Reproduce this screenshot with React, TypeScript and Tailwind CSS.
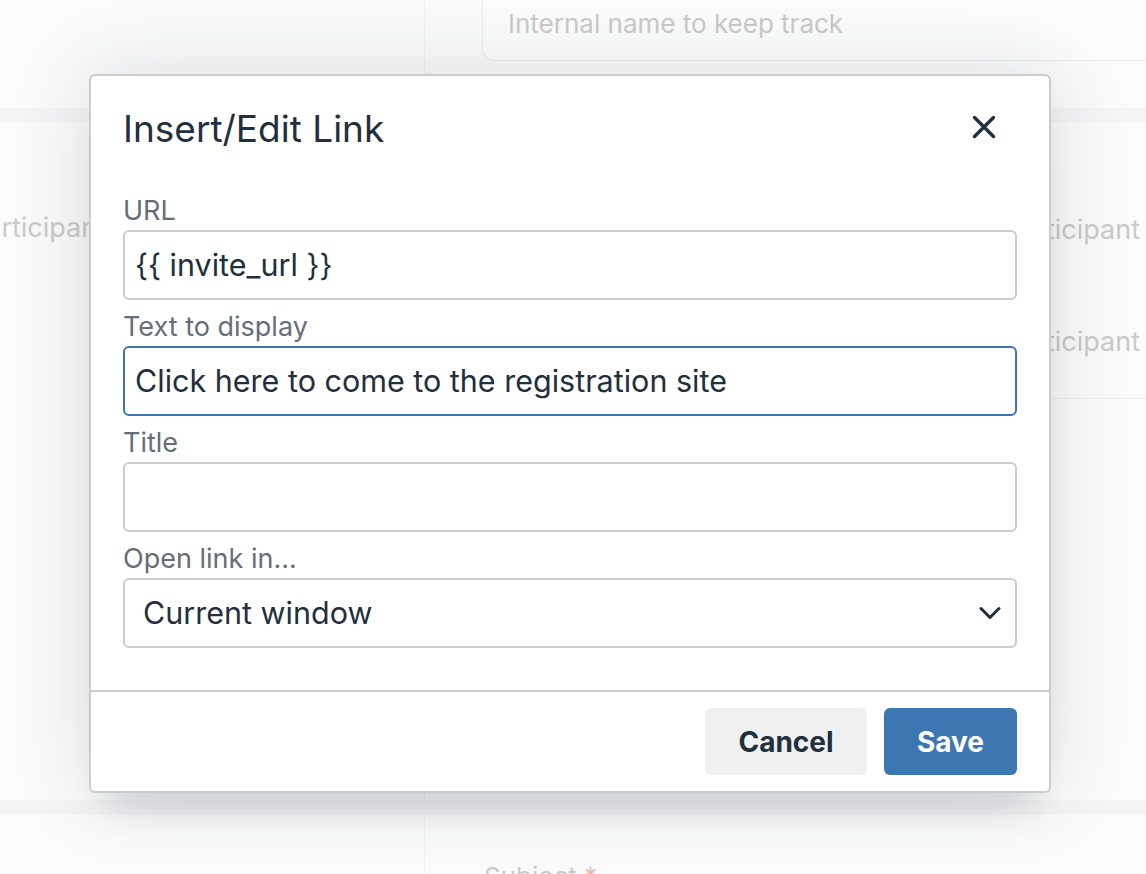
export default function App() {
  return (
    <div className="relative h-[874px] w-[1146px] overflow-hidden bg-white font-[Inter,sans-serif]">
      <PageBehind />
      <LinkDialog />
    </div>
  )
}

function PageBehind() {
  return (
    <div className="flex h-full flex-col bg-[#fbfbfb]">
      <div className="flex h-[108px] shrink-0">
        <div className="w-[425px] border-r border-[#f0f0f0]" />
        <div className="flex-1 pl-[57px]">
          <div className="-mt-px flex h-[62px] items-center rounded-bl-[12px] border-b border-l border-[#ececec] bg-[#fcfcfc] pb-[12px] pl-[25px] text-[26px] text-[#cacaca]">
            Internal name to keep track
          </div>
        </div>
      </div>
      <div className="h-[14px] shrink-0 bg-[#f5f5f6]" />
      <div className="flex h-[678px] shrink-0">
        <div className="w-[425px] overflow-hidden border-r border-[#f0f0f0] pt-[90px]">
          <div className="-ml-[31px] text-[27px] leading-[32px] text-[#cacaca]">Participant</div>
        </div>
        <div className="flex flex-1 flex-col items-end">
          <div className="pr-[6px] pt-[92px] text-[27px] leading-[32px] text-[#cacaca]">Participant</div>
          <div className="mt-[80px] pr-[6px] text-[27px] leading-[32px] text-[#cacaca]">Participant</div>
          <div className="mt-[40px] w-full border-b border-[#eeeeee]" />
        </div>
      </div>
      <div className="h-[15px] shrink-0 bg-[#f5f5f6]" />
      <div className="flex min-h-0 flex-1 overflow-hidden">
        <div className="w-[425px] border-r border-[#f0f0f0]" />
        <div className="pl-[59px] pt-[46px] text-[26px] leading-[32px] text-[#cacaca]">
          Subject <span className="text-[#efb3b3]">*</span>
        </div>
      </div>
    </div>
  )
}

function Field({ label, children }: { label: string; children: React.ReactNode }) {
  return (
    <div className="flex flex-col">
      <label className="h-[36px] text-[27px] leading-[36px] text-[#656e78]">{label}</label>
      <div className="mt-px">{children}</div>
    </div>
  )
}

function LinkDialog() {
  return (
    <div className="absolute left-[89px] top-[74px] w-[962px] rounded-[6px] border-2 border-[#cccccc] bg-white text-[#222f3e] shadow-[0_32px_32px_-20px_rgba(34,47,62,0.15),0_0_80px_2px_rgba(34,47,62,0.15)]">
      <div className="flex items-center justify-between px-[32px] pt-[31px]">
        <h1 className="h-[44px] text-[37px] leading-[44px]">Insert/Edit Link</h1>
        <button className="-mt-[5px] mr-[21px] flex h-[24px] w-[24px] items-center justify-center">
          <svg width="24" height="24" viewBox="0 0 24 24" fill="none" stroke="#222f3e" strokeWidth="3.4" strokeLinecap="round">
            <path d="M2.5 2.5 21.5 21.5M21.5 2.5 2.5 21.5" />
          </svg>
        </button>
      </div>

      <div className="mt-[42px] flex flex-col gap-[9px] px-[32px] pb-[42px]">
        <Field label="URL">
          <div className="flex h-[70px] items-center rounded-[6px] border-2 border-[#cccccc] px-[10px] text-[30.5px]">
            {'{{ invite_url }}'}
          </div>
        </Field>
        <Field label="Text to display">
          <div className="flex h-[70px] items-center rounded-[6px] border-2 border-[#3b76b2] px-[10px] text-[30.5px]">
            Click here to come to the registration site
          </div>
        </Field>
        <Field label="Title">
          <div className="h-[70px] rounded-[6px] border-2 border-[#cccccc]" />
        </Field>
        <Field label="Open link in...">
          <div className="flex h-[70px] items-center justify-between rounded-[6px] border-2 border-[#cccccc] pl-[18px] pr-[14px] text-[30.5px]">
            <span>Current window</span>
            <svg width="22" height="14" viewBox="0 0 22 14" fill="none" stroke="#222f3e" strokeWidth="3" strokeLinecap="round" strokeLinejoin="round">
              <path d="M2 2.5 11 11.5 20 2.5" />
            </svg>
          </div>
        </Field>
      </div>

      <div className="flex justify-end gap-[17px] border-t-2 border-[#cccccc] px-[32px] pb-[16px] pt-[16px]">
        <button className="h-[67px] w-[162px] rounded-[6px] bg-[#f0f0f0] text-[28px] font-bold text-[#222f3e]">Cancel</button>
        <button className="h-[67px] w-[133px] rounded-[6px] bg-[#3d77b2] text-[28px] font-bold text-white">Save</button>
      </div>
    </div>
  )
}
